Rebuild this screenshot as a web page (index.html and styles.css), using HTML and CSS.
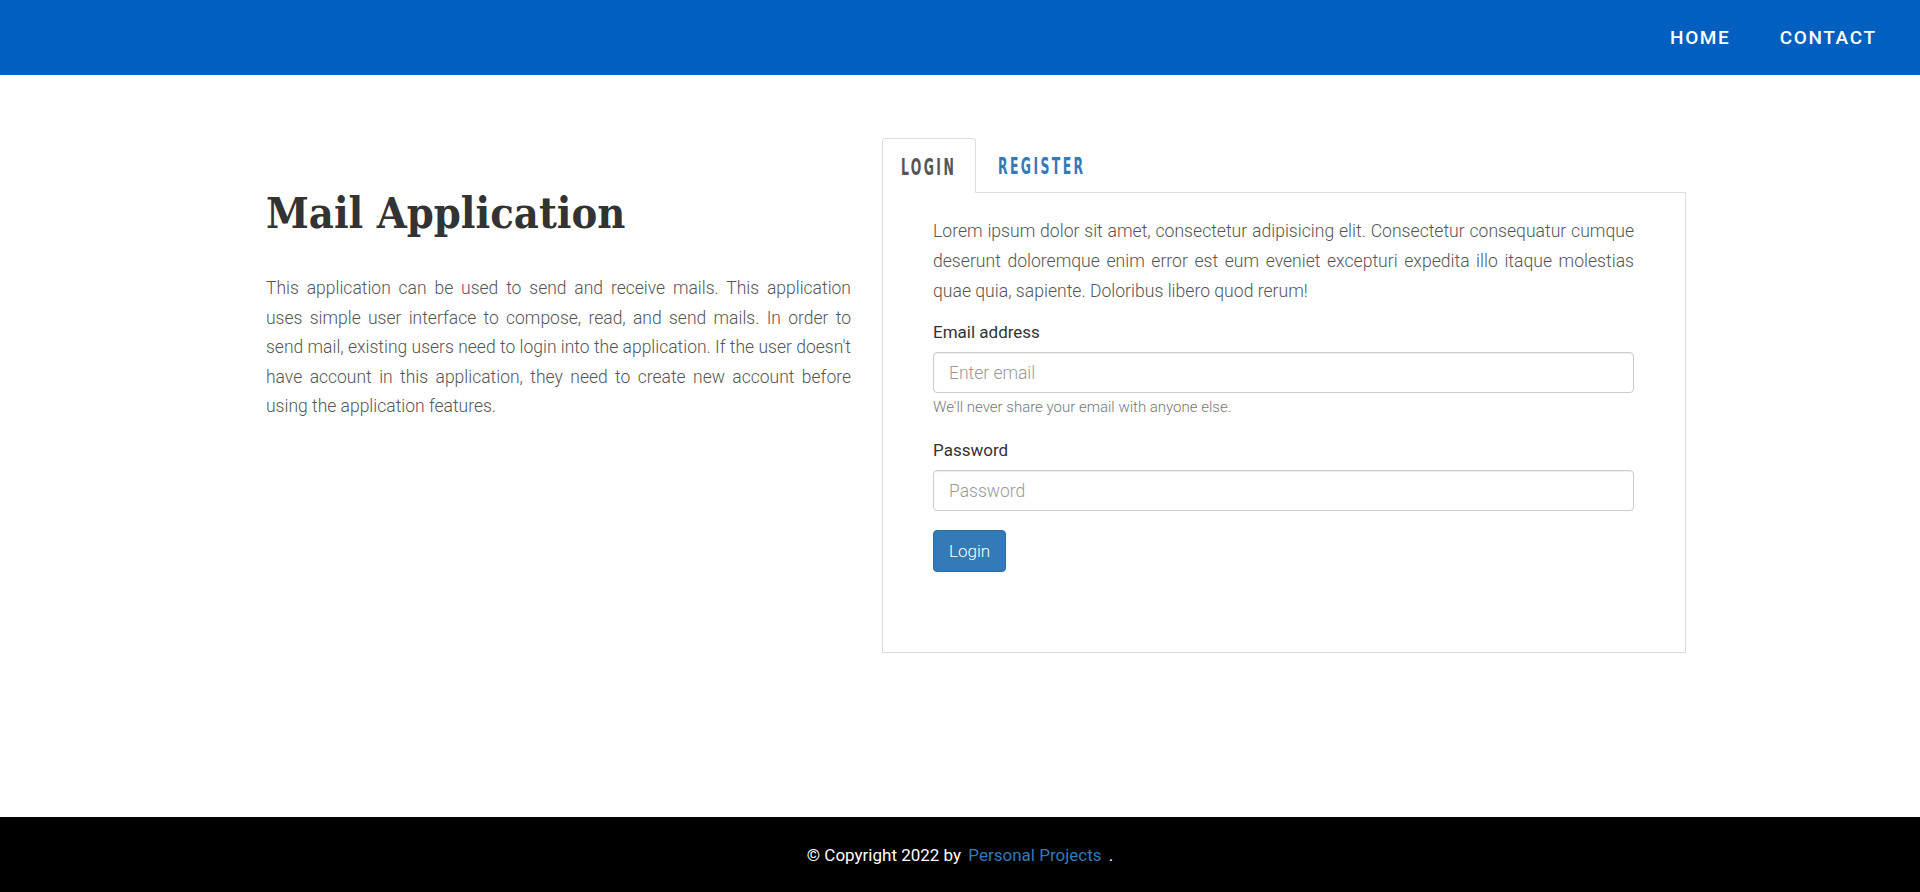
FILE: index.html
```html
<!DOCTYPE html>
<html lang="en">
<head>
<meta charset="utf-8">
<title>Mail Application</title>
<link rel="stylesheet" href="styles.css">
</head>
<body>
<header class="topbar">
  <nav class="nav">
    <a class="nav-link" href="#">HOME</a>
    <a class="nav-link" href="#">CONTACT</a>
  </nav>
</header>
<main class="main">
  <section class="intro">
    <h1 class="title">Mail Application</h1>
    <p class="intro-text">This application can be used to send and receive mails. This application uses simple user interface to compose, read, and send mails. In order to send mail, existing users need to login into the application. If the user doesn't have account in this application, they need to create new account before using the application features.</p>
  </section>
  <section class="auth">
    <div class="tabs">
      <a class="tab tab-active" href="#"><span class="tab-label">LOGIN</span></a>
      <a class="tab" href="#"><span class="tab-label">REGISTER</span></a>
    </div>
    <div class="panel">
      <p class="panel-text">Lorem ipsum dolor sit amet, consectetur adipisicing elit. Consectetur consequatur cumque deserunt doloremque enim error est eum eveniet excepturi expedita illo itaque molestias quae quia, sapiente. Doloribus libero quod rerum!</p>
      <form class="form">
        <label class="label" for="email">Email address</label>
        <input class="input" id="email" type="email" placeholder="Enter email">
        <small class="help">We'll never share your email with anyone else.</small>
        <label class="label label-gap" for="password">Password</label>
        <input class="input" id="password" type="password" placeholder="Password">
        <button class="btn" type="button">Login</button>
      </form>
    </div>
  </section>
</main>
<footer class="footer">
  <p class="footer-text">© Copyright 2022 by <a class="footer-link" href="#">Personal Projects</a> .</p>
</footer>
</body>
</html>
```
FILE: styles.css
```css
* { box-sizing: border-box; }
html, body { height: 100%; }
body {
  margin: 0;
  font-family: Roboto, "Liberation Sans", sans-serif;
  color: #333;
  background: #fff;
  display: flex;
  flex-direction: column;
  min-height: 100vh;
}
.topbar {
  height: 75px;
  background: #005fbf;
  display: flex;
  justify-content: flex-end;
  align-items: center;
  padding-right: 45px;
}
.nav { display: flex; gap: 51px; }
.nav-link {
  color: #fff;
  text-decoration: none;
  font-size: 19px;
  font-weight: 500;
  letter-spacing: 1.6px;
  margin-right: -1.6px;
}
.main {
  display: flex;
  gap: 31px;
  margin-left: 266px;
  width: 1420px;
  padding-top: 62px;
}
.intro { width: 585px; padding-top: 51px; }
.title {
  margin: 0;
  font-family: "DejaVu Serif Condensed", "DejaVu Serif", serif;
  font-weight: bold;
  font-size: 43px;
  line-height: 50px;
  color: #333;
}
.intro-text {
  margin: 36px 0 0;
  font-size: 17.5px;
  font-weight: 300;
  line-height: 29.6px;
  color: #555;
  text-align: justify;
}
.auth { width: 804px; }
.tabs { display: flex; height: 55px; }
.tab {
  display: block;
  height: 55px;
  padding: 16px 0 0 21px;
  border: 1px solid transparent;
  border-bottom: none;
  border-radius: 4px 4px 0 0;
  text-decoration: none;
  color: #337ab7;
  width: 110px;
}
.tab-active {
  width: 94px;
  padding-left: 18px;
  border-color: #ddd;
  color: #555;
  background: #fff;
  position: relative;
  top: 1px;
}
.tab-label {
  display: inline-block;
  font-family: "DejaVu Sans Condensed", "DejaVu Sans", sans-serif;
  font-weight: bold;
  font-size: 23px;
  line-height: 24px;
  letter-spacing: 4px;
  transform: scaleX(0.6);
  transform-origin: left center;
  white-space: nowrap;
}
.panel {
  border: 1px solid #ddd;
  padding: 23px 51px 80px 50px;
}
.panel-text {
  margin: 0;
  font-size: 17.6px;
  font-weight: 300;
  line-height: 30px;
  color: #555;
  text-align: justify;
}
.form { display: flex; flex-direction: column; align-items: flex-start; margin-top: 15px; }
.label {
  display: block;
  font-size: 17px;
  line-height: 22px;
  color: #333;
  margin-bottom: 9px;
}
.label-gap { margin-top: 24px; }
.input {
  width: 100%;
  height: 41px;
  border: 1px solid #ccc;
  border-radius: 4px;
  padding: 0 15px;
  font-family: Roboto, "Liberation Sans", sans-serif;
  font-size: 17.5px;
  font-weight: 300;
  color: #555;
  box-shadow: inset 0 1px 1px rgba(0,0,0,0.075);
}
.input::placeholder { color: #999; }
.help {
  display: block;
  margin-top: 6px;
  font-size: 15px;
  line-height: 16px;
  font-weight: 300;
  color: #777;
}
.btn {
  margin-top: 19px;
  height: 42px;
  padding: 0 15px;
  background: #337ab7;
  border: 1px solid #2e6da4;
  border-radius: 4px;
  color: #fff;
  font-family: Roboto, "Liberation Sans", sans-serif;
  font-size: 17px;
  font-weight: 300;
}
.footer {
  margin-top: auto;
  height: 75px;
  background: #000;
  display: flex;
  justify-content: center;
  align-items: center;
}
.footer-text {
  margin: 0;
  color: #fff;
  font-size: 17px;
  font-weight: 400;
}
.footer-link { color: #337ab7; text-decoration: none; margin: 0 3px; }
```
